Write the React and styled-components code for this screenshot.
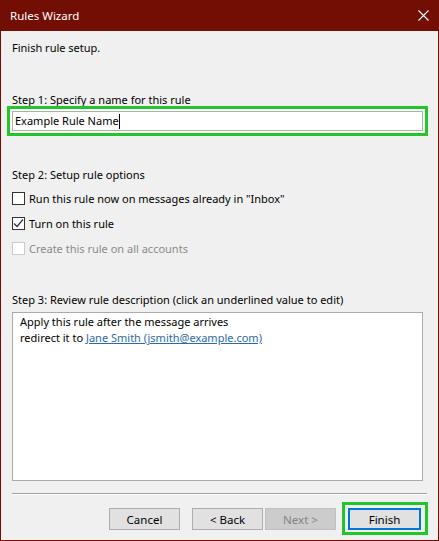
import React from 'react';
import styled, { createGlobalStyle } from 'styled-components';

const FONT = '"Segoe UI", "Noto Sans", "Liberation Sans", sans-serif';
const FRAME = '#720e04';
const HIGHLIGHT = '#22c52a';

const GlobalStyle = createGlobalStyle`
    html, body {
        margin: 0;
        padding: 0;
        background: #f0f0f0;
    }
    * { box-sizing: border-box; }
`;

const Window = styled.div`
    width: 439px;
    height: 541px;
    display: flex;
    flex-direction: column;
    font-family: ${FONT};
    font-size: 11px;
    color: #000;
    background: #f0f0f0;
    border: 1px solid ${FRAME};
    border-top: none;
    overflow: hidden;
`;

const TitleBar = styled.div`
    height: 31px;
    margin: 0 -1px;
    flex: none;
    display: flex;
    align-items: center;
    justify-content: space-between;
    padding: 0 10px 0 10px;
    background: ${FRAME};
    color: #fff;
    font-size: 11.5px;
`;

const CloseIcon = () => (
    <svg width="11" height="11" viewBox="0 0 11 11">
        <path d="M0.5 0.5 L10.5 10.5 M10.5 0.5 L0.5 10.5" stroke="#fff" strokeWidth="1.1" />
    </svg>
);

const Body = styled.div`
    flex: 1;
    display: flex;
    flex-direction: column;
    padding: 9px 10px 0 11px;
`;

const Text = styled.div`
    line-height: 16px;
    margin-top: ${({ top }) => top || 0}px;
`;

const Highlight = styled.div`
    border: 3px solid ${HIGHLIGHT};
    padding: 2px;
    background: #fff;
`;

const NameBox = styled(Highlight)`
    margin: -2px 0 0 -5px;
    width: 421px;
`;

const NameInput = styled.div`
    height: 20px;
    border: 1px solid #adadad;
    background: #fff;
    padding-left: 2px;
    line-height: 18px;
    display: flex;
    align-items: center;
`;

const Caret = styled.span`
    display: inline-block;
    width: 1px;
    height: 15px;
    background: #000;
`;

const Options = styled.div`
    display: flex;
    flex-direction: column;
    gap: 12px;
    margin-top: 9px;
`;

const Option = styled.label`
    display: flex;
    align-items: center;
    gap: 4px;
    height: 13px;
    line-height: 16px;
    color: ${({ disabled }) => disabled ? '#8b8b8b' : '#000'};
`;

const Box = styled.span`
    width: 13px;
    height: 13px;
    flex: none;
    border: 1px solid ${({ disabled }) => disabled ? '#cccccc' : '#333333'};
    background: #fff;
    display: flex;
    align-items: center;
    justify-content: center;
`;

const Check = () => (
    <svg width="11" height="11" viewBox="0 0 11 11">
        <path d="M1 5.5 L4 8.5 L10 1.5" stroke="#333" strokeWidth="1.2" fill="none" />
    </svg>
);

const Description = styled.div`
    margin-top: 4px;
    width: 411px;
    height: 169px;
    flex: none;
    border: 1px solid #ababab;
    background: #fff;
    padding: 1px 7px;
    line-height: 16px;
`;

const Link = styled.a`
    color: #2e6aa5;
    text-decoration: underline;
`;

const Separator = styled.div`
    margin-top: 12px;
    width: 415px;
    height: 2px;
    flex: none;
    border-top: 1px solid #a0a0a0;
    border-bottom: 1px solid #fff;
`;

const Footer = styled.div`
    display: flex;
    align-items: flex-start;
    margin-top: 7px;
    padding-left: 97px;
`;

const Button = styled.button`
    width: 73px;
    height: 22px;
    margin-top: 6px;
    margin-left: ${({ gap }) => gap || 0}px;
    font-family: ${FONT};
    font-size: 11.5px;
    padding: 0;
    border: 1px solid ${({ disabled }) => disabled ? '#bfbfbf' : '#adadad'};
    background: ${({ disabled }) => disabled ? '#cccccc' : '#e1e1e1'};
    color: ${({ disabled }) => disabled ? '#838383' : '#000'};
`;

const DefaultButton = styled(Button)`
    margin: 0;
    border: 2px solid #0078d7;
`;

const FinishFrame = styled(Highlight)`
    margin-left: 6px;
    padding: 3px 4px 2px 3px;
    background: #f0f0f0;
`;

export default function App() {
    return (
        <>
            <GlobalStyle />
            <Window>
                <TitleBar>
                    <span>Rules Wizard</span>
                    <CloseIcon />
                </TitleBar>
                <Body>
                    <Text>Finish rule setup.</Text>
                    <Text top={36}>Step 1: Specify a name for this rule</Text>
                    <NameBox>
                        <NameInput>Example Rule Name<Caret /></NameInput>
                    </NameBox>
                    <Text top={31}>Step 2: Setup rule options</Text>
                    <Options>
                        <Option><Box />Run this rule now on messages already in "Inbox"</Option>
                        <Option><Box><Check /></Box>Turn on this rule</Option>
                        <Option disabled><Box disabled />Create this rule on all accounts</Option>
                    </Options>
                    <Text top={37}>Step 3: Review rule description (click an underlined value to edit)</Text>
                    <Description>
                        Apply this rule after the message arrives<br />
                        redirect it to <Link>Jane Smith (jsmith@example.com)</Link>
                    </Description>
                    <Separator />
                    <Footer>
                        <Button>Cancel</Button>
                        <Button gap={12}>&lt; Back</Button>
                        <Button gap={2} disabled>Next &gt;</Button>
                        <FinishFrame>
                            <DefaultButton>Finish</DefaultButton>
                        </FinishFrame>
                    </Footer>
                </Body>
            </Window>
        </>
    );
}
